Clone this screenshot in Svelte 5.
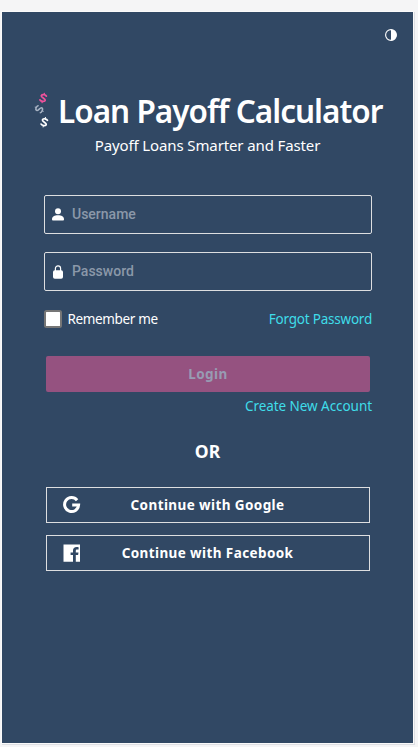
<script>
  let username = $state('');
  let password = $state('');
  let remember = $state(false);
</script>

<div class="page">
  <main class="panel">
    <header class="bar">
      <button class="theme" aria-label="Toggle theme">
        <svg width="12" height="12" viewBox="0 0 12 12">
          <circle cx="6" cy="6" r="5.4" fill="none" stroke="#fff" stroke-width="1.1" />
          <path d="M6 .5a5.5 5.5 0 0 1 0 11z" fill="#fff" />
        </svg>
      </button>
    </header>

    <div class="brand">
      <svg class="logo" width="16" height="36" viewBox="0 0 16 36" fill="none" stroke-linecap="round" stroke-linejoin="round">
        <g transform="translate(9.2 6) rotate(14)" stroke="#f0529c" stroke-width="1.8">
          <path d="M2.600-2.600C1.800-3.700-2.400-3.900-2.400-1.800C-2.400.1 2.500-.1 2.500 1.800C2.500 3.900-2 3.700-2.700 2.600" />
          <path d="M0-4.900v.8M0 4.100v.8" stroke-width="1.200" />
        </g>
        <g transform="translate(5.200 17.200) rotate(-62)" stroke="#a9b4c4" stroke-width="1.500">
          <path d="M2.500-2.600C1.800-3.700-2.300-3.800-2.300-1.700C-2.300.1 2.400-.1 2.400 1.700C2.400 3.800-1.900 3.700-2.500 2.600" />
          <path d="M0-4.600v.7M0 3.900v.7" stroke-width="1" />
        </g>
        <g transform="translate(10.300 30.200) rotate(14)" stroke="#fff" stroke-width="1.700">
          <path d="M2.600-2.600C1.800-3.700-2.400-3.900-2.400-1.800C-2.400.1 2.500-.1 2.500 1.800C2.500 3.900-2 3.700-2.700 2.600" />
          <path d="M0-4.900v.8M0 4.100v.8" stroke-width="1.100" />
        </g>
      </svg>
      <h1>Loan Payoff Calculator</h1>
    </div>
    <p class="tagline">Payoff Loans Smarter and Faster</p>

    <form onsubmit={(e) => e.preventDefault()}>
      <label class="field">
        <svg width="12" height="13" viewBox="0 0 12 13" fill="#fff">
          <circle cx="6" cy="3.3" r="3" />
          <path d="M0 11.2C0 8.5 2.5 7.2 6 7.2s6 1.3 6 4c0 .9-.4 1.3-1.2 1.3H1.2C.4 12.500 0 12.100 0 11.200z" />
        </svg>
        <input type="text" placeholder="Username" bind:value={username} />
      </label>
      <label class="field">
        <svg width="12" height="14" viewBox="0 0 12 14" fill="#fff">
          <path d="M3.400 6V3.400a2.600 2.600 0 0 1 5.200 0V6" fill="none" stroke="#fff" stroke-width="1.200" />
          <rect x="1" y="5.200" width="10" height="8.600" rx="1.800" />
        </svg>
        <input type="password" placeholder="Password" bind:value={password} />
      </label>

      <div class="options">
        <label class="remember">
          <input type="checkbox" bind:checked={remember} />
          <span>Remember me</span>
        </label>
        <a class="forgot" href="#forgot">Forgot Password</a>
      </div>

      <button class="login" type="submit">Login</button>
      <a class="create" href="#create">Create New Account</a>
    </form>

    <div class="or">OR</div>

    <div class="social">
      <button>
        <svg width="18" height="18" viewBox="0 0 18 18">
          <path d="M14.100 4.200A7 7 0 1 0 15.600 9H9.200" fill="none" stroke="#fff" stroke-width="3" />
        </svg>
        <span>Continue with Google</span>
      </button>
      <button>
        <svg width="18" height="18" viewBox="0 0 18 18">
          <path d="M.5.500h16.500v17.300h-4.200v-6.700h2.300l.4-2.700h-2.700V6.800c0-.8.4-1.300 1.400-1.300h1.400V3.200c-.6-.1-1.200-.2-1.900-.2-2.300 0-3.700 1.300-3.700 3.600v1.800H7.600v2.700H10v6.700H.5z" fill="#fff" />
        </svg>
        <span>Continue with Facebook</span>
      </button>
    </div>
  </main>
</div>

<style>
  :global(body) { background: #f5f5f6; }
  .page {
    box-sizing: border-box;
    height: 747px;
    padding: 12px 5px 4px 2px;
    overflow: hidden;
    font-family: "Noto Sans", "Open Sans", sans-serif;
    color: #fff;
  }
  .panel {
    box-sizing: border-box;
    height: 731px;
    background: #314864;
    box-shadow: 0 0 0 1px #fafafa, 1px 1px 0 1px #dedfe3;
    display: flex;
    flex-direction: column;
  }
  button { font-family: inherit; cursor: pointer; }
  .bar { display: flex; justify-content: flex-end; height: 75px; padding: 17px 16px 0 0; box-sizing: border-box; }
  .theme { width: 12px; height: 12px; padding: 0; border: 0; background: none; display: block; }
  .theme svg { display: block; }
  .brand { display: flex; height: 47px; padding-left: 32px; }
  .logo { flex: none; margin-top: 5px; }
  h1 {
    margin: 0 0 0 8px;
    font-size: 31.5px;
    line-height: 47px;
    font-weight: 600;
    letter-spacing: -0.98px;
    white-space: nowrap;
  }
  .tagline { margin: 0; height: 22px; line-height: 22px; font-size: 15px; text-align: center; letter-spacing: -0.12px; }
  form { display: flex; flex-direction: column; margin: 39px 41px 0 42px; }
  .field {
    display: flex;
    align-items: center;
    box-sizing: border-box;
    height: 39px;
    margin-bottom: 18px;
    padding-left: 7px;
    border: 1px solid #dddee0;
    border-radius: 2px;
  }
  .field svg { flex: none; margin-right: 8px; }
  .field input {
    flex: 1;
    min-width: 0;
    padding: 0 0 2px;
    border: 0;
    outline: none;
    background: none;
    color: #fff;
    font: 500 14px/20px Roboto, sans-serif;
  }
  .field input::placeholder { color: #8b98a9; opacity: 1; }
  .options { display: flex; justify-content: space-between; align-items: center; height: 20px; }
  .remember { display: flex; align-items: center; font-size: 13.5px; line-height: 20px; letter-spacing: -0.36px; }
  .remember input {
    appearance: none;
    box-sizing: border-box;
    width: 18px;
    height: 18px;
    margin: 0 5.5px 0 0;
    border: 2px solid #767676;
    border-radius: 2.5px;
    background: #fff;
  }
  a { color: #3fdde9; font-size: 13.5px; line-height: 20px; text-decoration: none; }
  .forgot { letter-spacing: -0.22px; }
  .login {
    height: 36px;
    margin: 27px 2px 4px;
    padding: 0;
    border: 0;
    border-radius: 2px;
    background: #955280;
    color: #989bb3;
    font-size: 13.5px;
    font-weight: 700;
    letter-spacing: 0.4px;
  }
  .create { align-self: flex-end; letter-spacing: -0.06px; }
  .or { margin-top: 23px; height: 24px; line-height: 24px; font-size: 17.500px; font-weight: 700; text-align: center; }
  .social { display: flex; flex-direction: column; gap: 12px; margin: 24px 43px 0 44px; }
  .social button {
    display: flex;
    align-items: center;
    height: 36px;
    padding: 0 16px;
    border: 1px solid #dddee0;
    background: none;
    color: #fff;
    font-size: 13.5px;
    line-height: 18px;
    font-weight: 700;
    letter-spacing: 0.4px;
  }
  .social svg { flex: none; }
  .social span { flex: 1; text-align: center; padding: 0 19px 0 0; white-space: nowrap; }
</style>
